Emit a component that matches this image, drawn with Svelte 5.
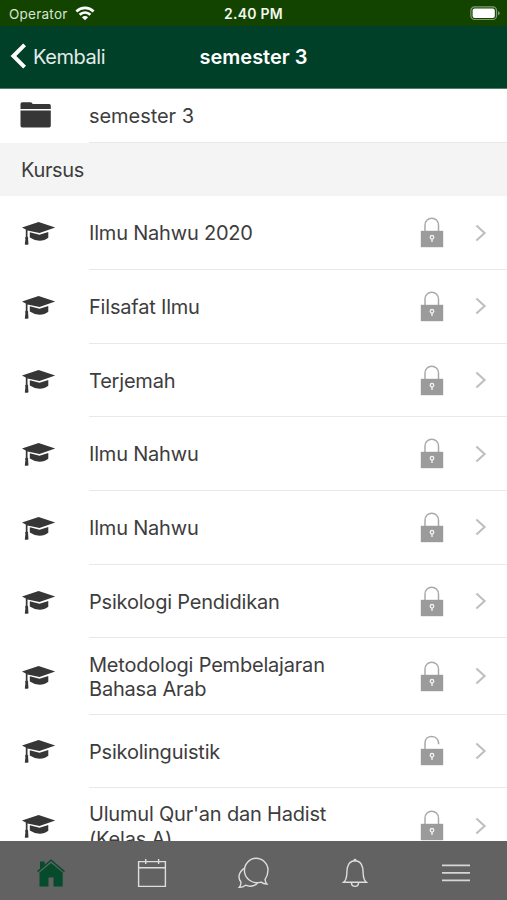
<script>
  const courses = [
    { name: 'Ilmu Nahwu 2020' },
    { name: 'Filsafat Ilmu' },
    { name: 'Terjemah' },
    { name: 'Ilmu Nahwu' },
    { name: 'Ilmu Nahwu' },
    { name: 'Psikologi Pendidikan' },
    { name: 'Metodologi Pembelajaran Bahasa Arab', tall: true },
    { name: 'Psikolinguistik', open: true },
    { name: "Ulumul Qur'an dan Hadist (Kelas A)", tall: true }
  ];
</script>

<div class="screen">
  <div class="status">
    <span class="carrier">Operator
      <svg class="wifi" width="20" height="15" viewBox="0 0 20 15" fill="none" stroke="#fff" stroke-width="2.7">
        <path d="M1.4 5.400C6.300.8 13.700.8 18.600 5.400M4.600 8.800c3.200-2.900 7.600-2.900 10.800 0" />
        <path d="M10 14.200 6.900 11.200c1.800-1.600 4.400-1.600 6.200 0z" fill="#fff" stroke="none" />
      </svg>
    </span>
    <span class="clock">2.40 PM</span>
    <svg class="battery" width="31" height="15" viewBox="0 0 31 15">
      <rect x=".9" y=".9" width="25.600" height="12.600" rx="3.600" fill="none" stroke="#7f9c73" stroke-width="1.200" />
      <rect x="2.600" y="2.500" width="22.200" height="9.400" rx="2" fill="#fff" />
      <path d="M28 5v4.400q1.700-.7 1.700-2.200T28 5z" fill="#7f9c73" />
    </svg>
  </div>

  <header>
    <button class="back">
      <svg width="17" height="27" viewBox="0 0 17 27"><path d="M15.600 1.800 4.400 13l11.200 11.200" fill="none" stroke="#fff" stroke-width="4" /></svg>
      <span>Kembali</span>
    </button>
    <h1>semester 3</h1>
  </header>

  <main>
    <div class="row folder">
      <svg class="icon" width="36" height="30" viewBox="0 0 36 30" fill="#363636">
        <path d="M-.5 8V3q0-1.800 1.800-1.800h8q1.500 0 2 1.200.3.700 1.400.7h15.500q1.600 0 1.600 1.600V8zM-.5 9.400h30.300v15.300q0 1.700-1.700 1.700H1.200Q-.5 26.400-.5 24.700z" />
      </svg>
      <div class="body"><span class="name">semester 3</span></div>
    </div>
    <h2>Kursus</h2>
    {#each courses as course}
      <div class="row" class:tall={course.tall}>
        <svg class="icon" width="36" height="26" viewBox="0 0 36 26" fill="#363636">
          <path d="M1 7.500 17.600 2 34.200 7.600 18.500 13 6.500 10.400v6.200q1.100 1.100.6 2.400l.4 5.200q-1.800 1-3.700.300l.6-5.300q-.8-1.700.4-2.700V9.500z" />
          <path d="M8.800 12.300 18.500 14.800 27.300 12v5.700q-3.600 3-8.700 3T8.800 17.500z" />
        </svg>
        <div class="body">
          <span class="name">{course.name}</span>
          <svg class="lock" width="24" height="31" viewBox="0 0 24 31">
            {#if course.open}
              <path d="M5 14V8C5-.8 18-.8 18.600 8v1.200" fill="none" stroke="#a9a9a9" stroke-width="1.500" />
            {:else}
              <path d="M5 14V8.300C5-1 18.500-1 18.500 8.300V14" fill="none" stroke="#a9a9a9" stroke-width="1.500" />
            {/if}
            <rect x=".8" y="13.800" width="22.400" height="16.400" fill="#9b9b9b" />
            <circle cx="12" cy="20.300" r="1.800" fill="none" stroke="#f1f1f1" stroke-width="1.300" />
            <path d="M12 22v3" stroke="#f1f1f1" stroke-width="1.400" />
          </svg>
          <svg class="chevron" width="12" height="18" viewBox="0 0 12 18"><path d="M1.400 1.400 9.600 9l-8.200 7.600" fill="none" stroke="#bfbfbf" stroke-width="2.100" /></svg>
        </div>
      </div>
    {/each}
  </main>

  <nav>
    <svg width="32" height="32" viewBox="0 0 32 32">
      <path d="M4.500 15.500 16 6l11.700 9.500V29.500H18.500V20.500h-5V29.500H4.500zM5 4.500h4.600v4L5 12.500z" fill="#064b2b" />
      <path d="M2.600 14.600 16 3.200l13.400 11.400" fill="none" stroke="#064b2b" stroke-width="1.400" />
    </svg>
    <svg width="32" height="32" viewBox="0 0 32 32" fill="none" stroke="#dedede" stroke-width="1.400">
      <path d="M2.600 4.600h26.800v24.800H2.600zM2.600 10.800h26.800M9.700 2v5M22.600 2v5" />
    </svg>
    <svg width="32" height="32" viewBox="0 0 32 32" fill="none" stroke="#dedede" stroke-width="1.400">
      <path d="M28 22.700c.2 1.500.7 3 1.900 4.300-2.400 0-4.400-.7-5.900-1.900C15.500 27.800 7.400 21.300 7.400 13.600 7.400 6.800 12.600 1.300 19 1.300s12 5.200 12 11.800c0 3.800-1.200 7-3 9.600z" />
      <path d="M7.600 11.100C1.600 14.800.5 21 4 25.200c0 2-.4 3.700-1.700 5.100 2.700.1 4.500-.7 6.200-2.100 4.800 2 9.200.7 12-2" />
    </svg>
    <svg width="32" height="32" viewBox="0 0 32 32" fill="none" stroke="#dedede" stroke-width="1.400">
      <path d="M4.600 25.300c4.300-3.500 2.600-7.800 3.700-14.300.9-4.600 3.700-7.300 7.700-7.300s6.800 2.700 7.700 7.300c1.100 6.500-.6 10.800 3.700 14.300zM12.500 25.800c0 4.800 7 4.800 7 0" />
      <circle cx="16" cy="3.100" r="1.400" fill="#dedede" stroke="none" />
    </svg>
    <svg width="32" height="32" viewBox="0 0 32 32" fill="none" stroke="#d6d6d6" stroke-width="1.700">
      <path d="M2 8.400h28M2 15.900h28M2 23.400h28" />
    </svg>
  </nav>
</div>

<style>
  :global(body) { margin: 0; }
  .screen {
    width: 507px;
    height: 900px;
    display: flex;
    flex-direction: column;
    overflow: hidden;
    background: #fff;
    color: #3d3d3d;
    font-family: Inter, "Liberation Sans", sans-serif;
  }
  svg { display: block; flex: none; overflow: visible; }
  .status {
    height: 26px;
    flex: none;
    display: grid;
    grid-template-columns: 1fr auto 1fr;
    align-items: center;
    padding: 0 6px 0 9px;
    box-sizing: border-box;
    background: #124400;
    color: #f3f6f1;
    font-size: 13.500px;
  }
  .carrier { display: flex; align-items: center; gap: 7px; padding-top: 1px; color: #d9e3d4; letter-spacing: .25px; }
  .carrier svg { margin-bottom: 1px; }
  .clock { font-weight: 600; font-size: 14px; letter-spacing: .25px; margin-left: -3px; padding-top: 1px; }
  .battery { justify-self: end; }
  header {
    height: 63px;
    flex: none;
    box-sizing: border-box;
    display: grid;
    grid-template-columns: 1fr auto 1fr;
    align-items: center;
    padding: 0 9px;
    background: #003f28;
    border-bottom: 1px solid #547c6a;
    color: #fff;
  }
  .back {
    display: flex;
    align-items: center;
    gap: 7px;
    padding: 0;
    border: 0;
    background: none;
    color: #e3ece8;
    font: 20px Inter, sans-serif;
    letter-spacing: -.45px;
  }
  .back svg { position: relative; top: -1px; }
  h1 { margin: 0; font-size: 20px; font-weight: 600; letter-spacing: 0; }
  main { flex: 1; min-height: 0; overflow: hidden; }
  .row { display: flex; align-items: center; height: 73.700px; padding-left: 21px; }
  .row.tall { height: 76.200px; }
  .row.folder { height: 54px; }
  .folder .name { letter-spacing: -.05px; }
  .body {
    flex: 1;
    height: 100%;
    box-sizing: border-box;
    display: flex;
    align-items: center;
    margin-left: 32px;
    padding-right: 19px;
    border-bottom: 1px solid #e8e8e8;
  }
  .name { width: 262px; margin-right: 69px; padding-top: 2px; font-size: 20px; line-height: 24.500px; letter-spacing: -.2px; }
  .chevron { margin-left: 31px; }
  h2 {
    height: 53.300px;
    margin: 0;
    padding-left: 21px;
    background: #f4f4f4;
    font-size: 20px;
    font-weight: 400;
    line-height: 54px;
    letter-spacing: -.35px;
  }
  nav {
    height: 59px;
    flex: none;
    box-sizing: border-box;
    display: flex;
    justify-content: space-around;
    align-items: center;
    padding-top: 4px;
    background: #626262;
  }
</style>
